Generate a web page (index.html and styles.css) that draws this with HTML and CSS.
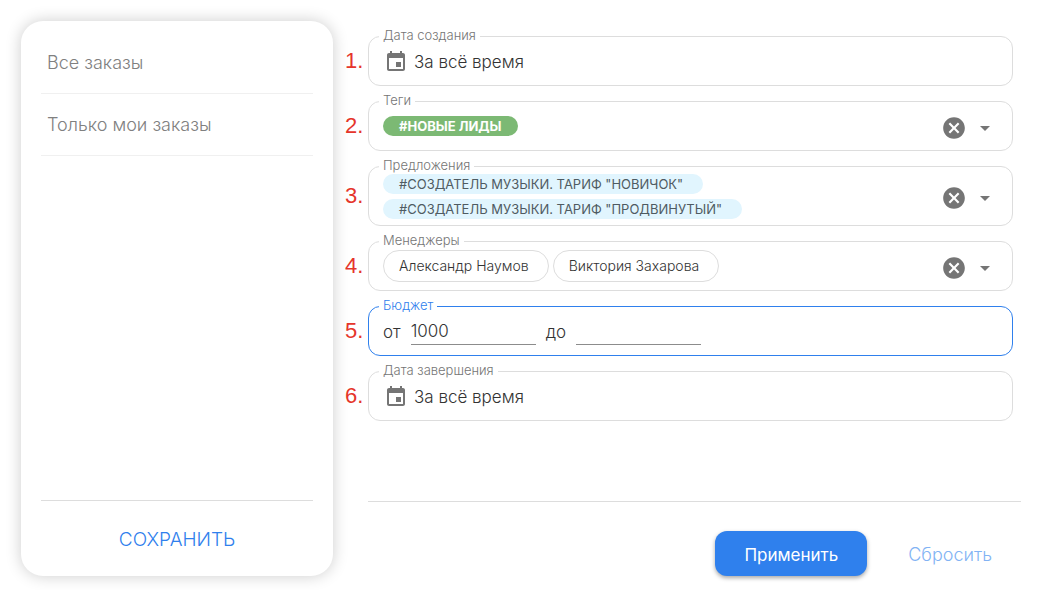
FILE: index.html
```
<!DOCTYPE html>
<html lang="ru">
<head>
    <meta charset="UTF-8">
    <meta name="viewport" content="width=device-width, initial-scale=1.0">
    <title>Фильтр заказов</title>
    <link rel="stylesheet" href="styles.css">
</head>
<body>
<svg class="icon-defs" aria-hidden="true">
    <symbol id="icon-calendar" viewBox="0 0 24 24">
        <path d="M17 12h-5v5h5v-5zM16 1v2H8V1H6v2H5c-1.11 0-1.99.9-1.99 2L3 19c0 1.1.89 2 2 2h14c1.1 0 2-.9 2-2V5c0-1.1-.9-2-2-2h-1V1h-2zm3 18H5V8h14v11z"/>
    </symbol>
    <symbol id="icon-clear" viewBox="0 0 24 24">
        <path d="M12 2C6.47 2 2 6.47 2 12s4.47 10 10 10 10-4.47 10-10S17.53 2 12 2zm5 13.59L15.59 17 12 13.41 8.41 17 7 15.59 10.59 12 7 8.41 8.41 7 12 10.59 15.59 7 17 8.41 13.41 12 17 15.59z"/>
    </symbol>
    <symbol id="icon-arrow" viewBox="0 0 24 24">
        <path d="M7 10l5 5 5-5z"/>
    </symbol>
</svg>

<div class="page">
    <aside class="sidebar">
        <nav class="presets">
            <a class="preset" href="#">Все заказы</a>
            <a class="preset" href="#">Только мои заказы</a>
        </nav>
        <div class="sidebar-footer">
            <button class="btn-save" type="button">СОХРАНИТЬ</button>
        </div>
    </aside>

    <form class="filter">
        <div class="fields">
            <div class="row">
                <span class="number">1.</span>
                <fieldset class="field">
                    <legend>Дата создания</legend>
                    <div class="field-body">
                        <button class="date" type="button">
                            <svg class="icon"><use href="#icon-calendar"/></svg>
                            За всё время
                        </button>
                    </div>
                </fieldset>
            </div>

            <div class="row">
                <span class="number">2.</span>
                <fieldset class="field">
                    <legend>Теги</legend>
                    <div class="field-body">
                        <div class="chips">
                            <span class="chip chip-green">#НОВЫЕ ЛИДЫ</span>
                        </div>
                        <div class="actions">
                            <button type="button" aria-label="Очистить теги"><svg class="icon icon-clear"><use href="#icon-clear"/></svg></button>
                            <button type="button" aria-label="Выбрать теги"><svg class="icon"><use href="#icon-arrow"/></svg></button>
                        </div>
                    </div>
                </fieldset>
            </div>

            <div class="row">
                <span class="number">3.</span>
                <fieldset class="field">
                    <legend>Предложения</legend>
                    <div class="field-body">
                        <div class="chips chips-column">
                            <span class="chip chip-blue">#СОЗДАТЕЛЬ МУЗЫКИ. ТАРИФ "НОВИЧОК"</span>
                            <span class="chip chip-blue">#СОЗДАТЕЛЬ МУЗЫКИ. ТАРИФ "ПРОДВИНУТЫЙ"</span>
                        </div>
                        <div class="actions">
                            <button type="button" aria-label="Очистить предложения"><svg class="icon icon-clear"><use href="#icon-clear"/></svg></button>
                            <button type="button" aria-label="Выбрать предложения"><svg class="icon"><use href="#icon-arrow"/></svg></button>
                        </div>
                    </div>
                </fieldset>
            </div>

            <div class="row">
                <span class="number">4.</span>
                <fieldset class="field">
                    <legend>Менеджеры</legend>
                    <div class="field-body">
                        <div class="chips">
                            <span class="chip chip-outline">Александр Наумов</span>
                            <span class="chip chip-outline">Виктория Захарова</span>
                        </div>
                        <div class="actions">
                            <button type="button" aria-label="Очистить менеджеров"><svg class="icon icon-clear"><use href="#icon-clear"/></svg></button>
                            <button type="button" aria-label="Выбрать менеджеров"><svg class="icon"><use href="#icon-arrow"/></svg></button>
                        </div>
                    </div>
                </fieldset>
            </div>

            <div class="row">
                <span class="number">5.</span>
                <fieldset class="field field-active">
                    <legend>Бюджет</legend>
                    <div class="field-body">
                        <div class="budget">
                            <label for="budgetFrom">от</label>
                            <input id="budgetFrom" name="budget_from" type="text" value="1000">
                            <label for="budgetTo">до</label>
                            <input id="budgetTo" name="budget_to" type="text">
                        </div>
                    </div>
                </fieldset>
            </div>

            <div class="row">
                <span class="number">6.</span>
                <fieldset class="field">
                    <legend>Дата завершения</legend>
                    <div class="field-body">
                        <button class="date" type="button">
                            <svg class="icon"><use href="#icon-calendar"/></svg>
                            За всё время
                        </button>
                    </div>
                </fieldset>
            </div>
        </div>

        <div class="filter-footer">
            <button class="btn btn-primary" type="button">Применить</button>
            <button class="btn btn-link" type="reset">Сбросить</button>
        </div>
    </form>
</div>
</body>
</html>
```
FILE: styles.css
```
* {
    box-sizing: border-box;
}

body {
    margin: 0;
    font-family: Inter, "Open Sans", sans-serif;
    font-weight: 300;
    font-size: 17px;
    color: #333;
    background-color: #fff;
}

button, input {
    font: inherit;
    color: inherit;
    background: none;
    border: none;
    padding: 0;
}

button {
    cursor: pointer;
}

.icon-defs {
    display: none;
}

.icon {
    width: 24px;
    height: 24px;
    fill: #757575;
    display: block;
}

.page {
    display: flex;
    gap: 10px;
    min-height: 100vh;
    padding: 21px 28px 14px 21px;
}

/* sidebar */
.sidebar {
    display: flex;
    flex-direction: column;
    flex: 0 0 312px;
    padding: 11px 20px 0;
    border-radius: 22px;
    box-shadow: 0 0 16px rgba(0, 0, 0, 0.2);
}

.presets {
    flex: 1;
}

.preset {
    display: block;
    padding: 0 6px;
    line-height: 61px;
    font-size: 18px;
    color: #808080;
    text-decoration: none;
    border-bottom: 1px solid #f0f0f0;
}

.sidebar-footer {
    border-top: 1px solid #ddd;
    text-align: center;
}

.btn-save {
    height: 75px;
    padding-top: 2px;
    font-size: 19px;
    color: #2f80ed;
}

/* filter form */
.filter {
    display: flex;
    flex-direction: column;
    flex: 1;
    min-width: 0;
}

.fields {
    display: flex;
    flex-direction: column;
    gap: 7px;
    flex: 1;
    padding: 7px 8px 0 0;
}

.row {
    display: flex;
    align-items: center;
}

.number {
    flex: 0 0 25px;
    padding: 7px 0 0 2px;
    font-family: "Liberation Sans", Arial, sans-serif;
    font-weight: 400;
    font-size: 22px;
    line-height: 24px;
    color: #e5352b;
}

.field {
    flex: 1;
    min-width: 0;
    margin: 0;
    padding: 0 10px;
    border: 1px solid #ddd;
    border-radius: 12px;
}

.field legend {
    padding: 0 4px 2px;
    font-size: 13px;
    line-height: 14px;
    color: #757575;
}

.field-active {
    border-color: #2f80ed;
}

.field-active legend {
    color: #2f80ed;
}

.field-body {
    display: flex;
    justify-content: space-between;
    min-height: 41px;
    padding: 0 4px;
}

.date {
    display: flex;
    align-items: center;
    gap: 6px;
    padding: 0 0 6px 1px;
}

.chips {
    display: flex;
    flex-wrap: wrap;
    align-items: center;
    gap: 4px;
    padding-bottom: 7px;
}

.chips-column {
    flex-direction: column;
    align-items: flex-start;
    gap: 5px;
    padding-bottom: 6px;
}

.chip {
    padding: 0 16px;
    border-radius: 16px;
    font-size: 13px;
    line-height: 20px;
}

.chip-green {
    color: #fff;
    font-weight: 700;
    background-color: #7cb974;
}

.chip-blue {
    padding-right: 20px;
    color: #4f5b62;
    font-weight: 400;
    background-color: #e1f5fe;
}

.chip-outline {
    padding: 0 19px 0 15px;
    border: 1px solid #ddd;
    font-size: 14px;
    line-height: 30px;
}

.actions {
    display: flex;
    align-items: center;
    gap: 6px;
    padding: 0 1px 3px 0;
}

.icon-clear {
    width: 26px;
    height: 26px;
}

.budget {
    display: flex;
    align-items: center;
    gap: 10px;
    padding-bottom: 6px;
}

.budget input {
    width: 125px;
    height: 27px;
    border-bottom: 1px solid #8c8c8c;
    border-radius: 0;
    outline: none;
}

.filter-footer {
    display: flex;
    justify-content: flex-end;
    gap: 12px;
    margin-left: 25px;
    padding-top: 29px;
    border-top: 1px solid #ddd;
}

.btn {
    height: 45px;
    padding: 2px 29px 0;
    border-radius: 12px;
}

.btn-primary {
    color: #fff;
    font-weight: 400;
    background-color: #2f80ed;
    box-shadow: 0 2px 4px rgba(0, 0, 0, 0.35);
}

.btn-link {
    font-size: 18px;
    color: #82b3f4;
}
```
